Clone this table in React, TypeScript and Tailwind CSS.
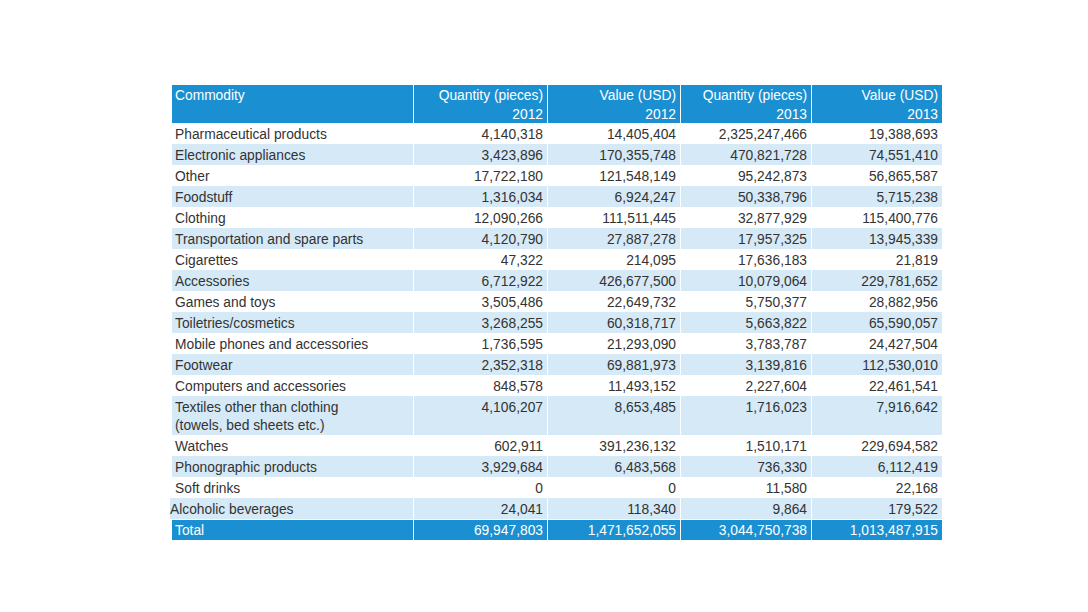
import React from 'react'

type Row = { name: string[]; q12: string; v12: string; q13: string; v13: string; shade: boolean; tight?: boolean }

const rows: Row[] = [
  { name: ['Pharmaceutical products'], q12: '4,140,318', v12: '14,405,404', q13: '2,325,247,466', v13: '19,388,693', shade: false },
  { name: ['Electronic appliances'], q12: '3,423,896', v12: '170,355,748', q13: '470,821,728', v13: '74,551,410', shade: true },
  { name: ['Other'], q12: '17,722,180', v12: '121,548,149', q13: '95,242,873', v13: '56,865,587', shade: false },
  { name: ['Foodstuff'], q12: '1,316,034', v12: '6,924,247', q13: '50,338,796', v13: '5,715,238', shade: true },
  { name: ['Clothing'], q12: '12,090,266', v12: '111,511,445', q13: '32,877,929', v13: '115,400,776', shade: false },
  { name: ['Transportation and spare parts'], q12: '4,120,790', v12: '27,887,278', q13: '17,957,325', v13: '13,945,339', shade: true },
  { name: ['Cigarettes'], q12: '47,322', v12: '214,095', q13: '17,636,183', v13: '21,819', shade: false },
  { name: ['Accessories'], q12: '6,712,922', v12: '426,677,500', q13: '10,079,064', v13: '229,781,652', shade: true },
  { name: ['Games and toys'], q12: '3,505,486', v12: '22,649,732', q13: '5,750,377', v13: '28,882,956', shade: false },
  { name: ['Toiletries/cosmetics'], q12: '3,268,255', v12: '60,318,717', q13: '5,663,822', v13: '65,590,057', shade: true },
  { name: ['Mobile phones and accessories'], q12: '1,736,595', v12: '21,293,090', q13: '3,783,787', v13: '24,427,504', shade: false },
  { name: ['Footwear'], q12: '2,352,318', v12: '69,881,973', q13: '3,139,816', v13: '112,530,010', shade: true },
  { name: ['Computers and accessories'], q12: '848,578', v12: '11,493,152', q13: '2,227,604', v13: '22,461,541', shade: false },
  { name: ['Textiles other than clothing', '(towels, bed sheets etc.)'], q12: '4,106,207', v12: '8,653,485', q13: '1,716,023', v13: '7,916,642', shade: true },
  { name: ['Watches'], q12: '602,911', v12: '391,236,132', q13: '1,510,171', v13: '229,694,582', shade: false },
  { name: ['Phonographic products'], q12: '3,929,684', v12: '6,483,568', q13: '736,330', v13: '6,112,419', shade: true },
  { name: ['Soft drinks'], q12: '0', v12: '0', q13: '11,580', v13: '22,168', shade: false },
  { name: ['Alcoholic beverages'], q12: '24,041', v12: '118,340', q13: '9,864', v13: '179,522', shade: true, tight: true },
]

const cols = 'grid grid-cols-[241px_133px_132px_130px_130px] gap-x-[1px]'

export default function App() {
  return (
    <div
      className="w-[1088px] h-[612px] bg-white text-[#333333] text-[13.8px]"
      style={{ fontFamily: '"Liberation Sans", Arial, sans-serif' }}
    >
      <div className="pt-[85px] pl-[172px]">
        <div className="w-[770px]">
          {/* header */}
          <div className={`${cols} text-white`}>
            <div className="bg-[#1a8fd1] h-[38px] pl-[3px] pt-[1px] leading-[19px]">Commodity</div>
            {[['Quantity (pieces)', '2012'], ['Value (USD)', '2012'], ['Quantity (pieces)', '2013'], ['Value (USD)', '2013']].map((h, i) => (
              <div key={i} className="bg-[#1a8fd1] h-[38px] pr-[4px] pt-[1px] text-right leading-[19px]">
                <div>{h[0]}</div>
                <div>{h[1]}</div>
              </div>
            ))}
          </div>

          {rows.map((r, i) => {
            const bg = r.shade ? 'bg-[#d5e9f6]' : 'bg-white'
            const h = r.name.length > 1 ? 'h-[39px]' : 'h-[21px]'
            return (
              <div key={i} className={cols}>
                <div className={`${bg} ${h} ${r.tight ? 'pl-0 -ml-[2px]' : 'pl-[3px]'} pt-[3px] leading-[18px]`}>
                  {r.name.map((n) => (
                    <div key={n}>{n}</div>
                  ))}
                </div>
                {[r.q12, r.v12, r.q13, r.v13].map((v, j) => (
                  <div key={j} className={`${bg} ${h} pr-[4px] pt-[3px] text-right leading-[18px]`}>
                    {v}
                  </div>
                ))}
              </div>
            )
          })}

          {/* total */}
          <div className={`${cols} text-white mt-[1px]`}>
            <div className="bg-[#1a8fd1] h-[20px] pl-[3px] pt-[2px] leading-[18px]">Total</div>
            {['69,947,803', '1,471,652,055', '3,044,750,738', '1,013,487,915'].map((v) => (
              <div key={v} className="bg-[#1a8fd1] h-[20px] pr-[4px] pt-[2px] text-right leading-[18px]">
                {v}
              </div>
            ))}
          </div>
        </div>
      </div>
    </div>
  )
}
